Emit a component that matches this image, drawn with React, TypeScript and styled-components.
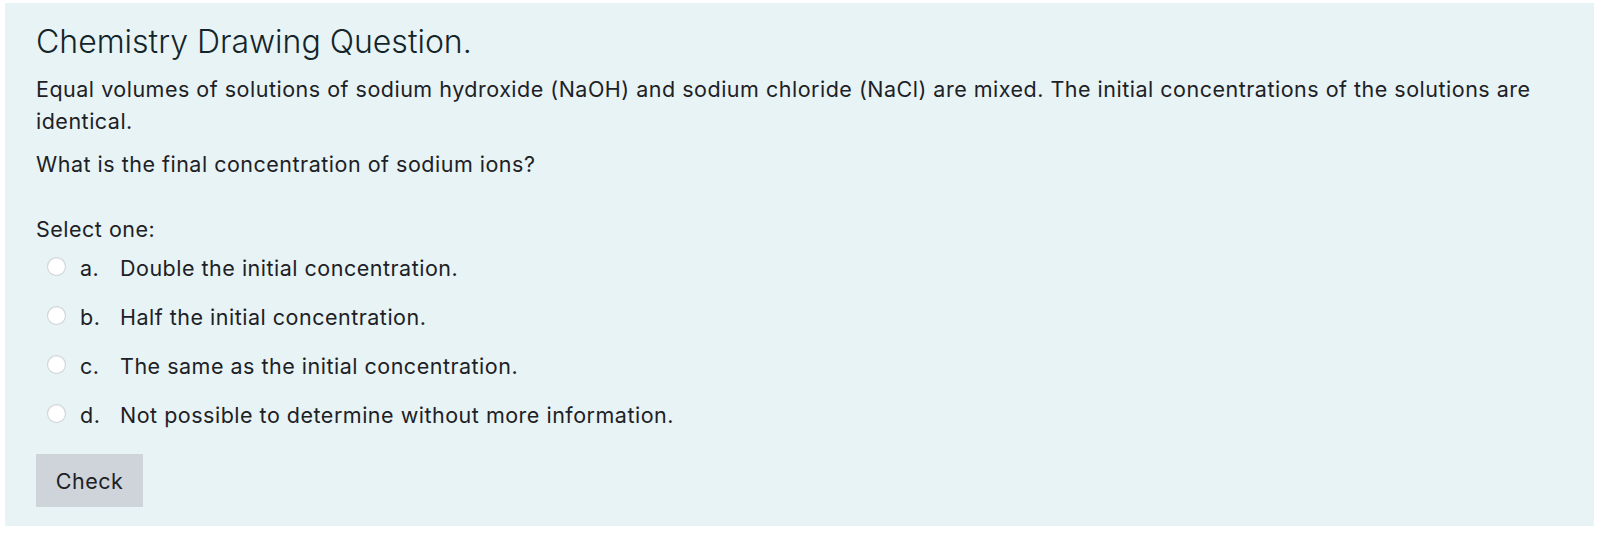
import React from "react";
import styled, { createGlobalStyle } from "styled-components";

const Global = createGlobalStyle`
  html, body { margin: 0; padding: 0; background: #ffffff; }
  body { font-family: Inter, "Noto Sans", sans-serif; color: #1d2125; }
`;

const Page = styled.div`
  padding: 3px 12px 12px 5px;
`;

const Panel = styled.div`
  background: #e7f3f5;
  padding: 20px 31px 19px 31px;
  display: flex;
  flex-direction: column;
`;

const Title = styled.h3`
  margin: 0 0 12px 0;
  font-size: 32px;
  font-weight: 300;
  line-height: 38px;
  color: #14252a;
`;

const Para = styled.p`
  margin: 0 0 11px 0;
  font-size: 21.5px;
  letter-spacing: 0.5px;
  line-height: 32px;
`;

const Prompt = styled.div`
  margin-top: 24px;
  font-size: 21.5px;
  letter-spacing: 0.5px;
  line-height: 28.5px;
`;

const Answers = styled.div`
  display: flex;
  flex-direction: column;
  padding-left: 12px;
`;

const Option = styled.label`
  display: flex;
  align-items: center;
  height: 49px;
  font-size: 21.5px;
  letter-spacing: 0.5px;
`;

const Radio = styled.span`
  width: 17px;
  height: 17px;
  margin-top: -3px;
  border-radius: 50%;
  background: #ffffff;
  box-shadow: 0 0 0 1px #cfd4d8, 0 1px 1px rgba(0, 0, 0, 0.05),
    inset 0 1px 1px rgba(0, 0, 0, 0.06);
  flex: none;
`;

const Letter = styled.span`
  width: 40px;
  margin-left: 15px;
`;

const Check = styled.button`
  align-self: flex-start;
  margin-top: 14.5px;
  width: 107px;
  height: 53px;
  padding: 0;
  border: none;
  border-radius: 0;
  background: #ced4da;
  color: #1d2125;
  font-family: Inter, "Noto Sans", sans-serif;
  font-size: 21.5px;
  letter-spacing: 0.5px;
`;

const options = [
  ["a.", "Double the initial concentration."],
  ["b.", "Half the initial concentration."],
  ["c.", "The same as the initial concentration."],
  ["d.", "Not possible to determine without more information."],
];

export default function App() {
  return (
    <>
      <Global />
      <Page>
        <Panel>
          <Title>Chemistry Drawing Question.</Title>
          <Para>
            Equal volumes of solutions of sodium hydroxide (NaOH) and sodium chloride (NaCl) are mixed. The initial concentrations of the solutions are identical.
          </Para>
          <Para>What is the final concentration of sodium ions?</Para>
          <Prompt>Select one:</Prompt>
          <Answers>
            {options.map(([l, t]) => (
              <Option key={l}>
                <Radio />
                <Letter>{l}</Letter>
                <span>{t}</span>
              </Option>
            ))}
          </Answers>
          <Check>Check</Check>
        </Panel>
      </Page>
    </>
  );
}
